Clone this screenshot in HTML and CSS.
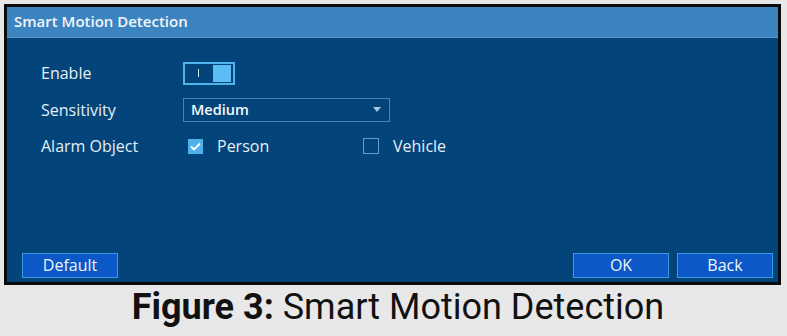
FILE: index.html
```html
<html><head>
<title>Smart Motion Detection</title>
<link rel="stylesheet" href="styles.css">
</head>
<body>
<div class="panel">
	<div class="head">Smart Motion Detection</div>
	<div class="form">
		<div class="row">
			<span class="label">Enable</span>
			<span class="toggle"><i class="mark"></i><i class="knob"></i></span>
		</div>
		<div class="row">
			<span class="label">Sensitivity</span>
			<span class="select">Medium<i class="arrow"></i></span>
		</div>
		<div class="row">
			<span class="label">Alarm Object</span>
			<span class="check on"><svg width="11" height="9" viewBox="0 0 11 9"><path d="M1 4.5 L4 7.5 L10 1.5" fill="none" stroke="#fff" stroke-width="1.8"/></svg></span>
			<span class="opt">Person</span>
			<span class="check off"></span>
			<span class="opt">Vehicle</span>
		</div>
	</div>
	<div class="foot">
		<span class="btn">Default</span>
		<span class="space"></span>
		<span class="btn">OK</span>
		<span class="btn">Back</span>
	</div>
</div>
<div class="caption"><b>Figure 3:</b> Smart Motion Detection</div>
</body></html>
```

FILE: styles.css
```css
body{margin:0;background-color:#e8e8e8;font-family:"Open Sans","DejaVu Sans",sans-serif;}
.panel{margin:4px 0 0 4px;width:771px;height:275px;border:3px solid #0b0b0b;background-color:#03457a;display:flex;flex-direction:column;}
.head{height:30px;line-height:29px;background-color:#3c84bf;border-bottom:1px solid #5d9bcf;color:#f2f6fa;font-size:15px;font-weight:600;padding-left:7px;}
.form{flex:1;padding:17px 0 0 34px;}
.row{display:flex;align-items:center;height:36.5px;color:#e6eef6;font-size:16px;}
.label{width:142px;}
.toggle{width:44px;height:19px;border:2px solid #4fb3ec;display:flex;align-items:center;padding:0 2px;box-sizing:content-box;}
.mark{width:1px;height:8px;background-color:#cfe6f6;margin-left:11px;}
.knob{width:18px;height:17px;background-color:#5bbdf3;margin-left:auto;}
.select{width:198px;height:22px;border:1px solid #4a82b4;display:flex;align-items:center;padding-left:7px;font-weight:600;color:#f4f8fb;font-size:14.5px;}
.arrow{margin-left:auto;margin-right:8px;width:0;height:0;border-left:4px solid transparent;border-right:4px solid transparent;border-top:5px solid #a9c6de;}
.check{width:15px;height:15px;display:flex;align-items:center;justify-content:center;box-sizing:border-box;}
.check.on{background-color:#4fb0ea;margin-left:5px;}
.check.off{border:1.5px solid #5c9ed4;width:16px;height:16px;}
.opt{margin-left:14px;width:146px;}
.foot{display:flex;gap:8px;padding:0 5px 4px 15px;}
.space{flex:1;}
.btn{width:94px;height:23px;line-height:23px;text-align:center;background-color:#0b58c6;border:1px solid #3b9be2;color:#f0f5fb;font-size:16px;}
.caption{text-align:center;font-family:Roboto,sans-serif;font-size:36px;color:#111;margin-top:0;padding-left:9px;line-height:44px;}
.caption b{font-weight:bold;}
```
